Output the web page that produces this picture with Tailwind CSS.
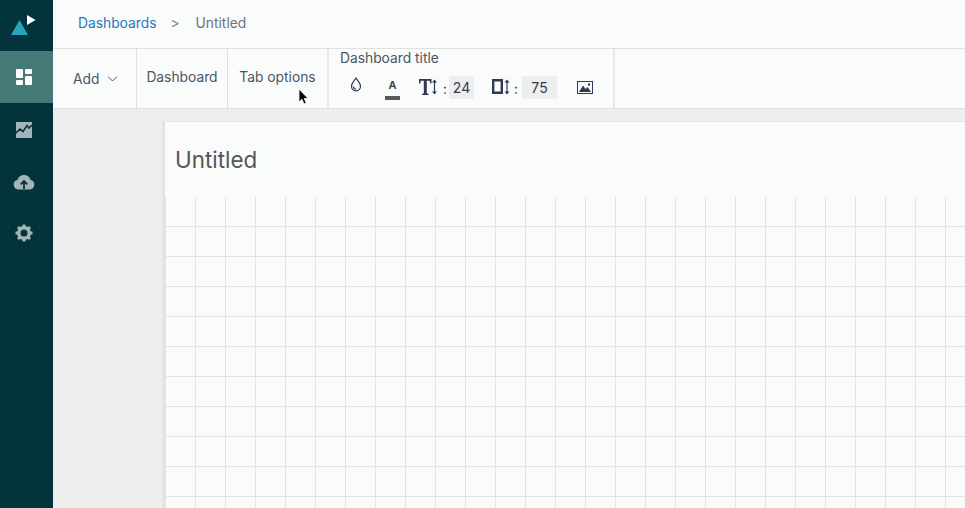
<!DOCTYPE html>
<html lang="en">
<head>
  <meta charset="UTF-8">
  <meta name="viewport" content="width=device-width, initial-scale=1.0">
  <title>Dashboard</title>
  <script src="https://cdn.jsdelivr.net/npm/@tailwindcss/browser@4"></script>
</head>
<body class="h-[508px] w-[965px] overflow-hidden bg-[#eeeeee] font-['Inter','Liberation_Sans',sans-serif] text-[13.8px] text-[#4b5563]">
  <div class="flex h-full">
    <!-- Sidebar -->
    <aside class="flex w-[53px] shrink-0 flex-col bg-[#03343b]">
      <div class="h-[51px]">
        <svg width="53" height="51" viewBox="0 0 53 51">
          <path d="M19.5 20 L28 35 H11 Z" fill="#27a5ba"/>
          <path d="M27 15 L35.5 20 L27 25 Z" fill="#ffffff"/>
        </svg>
      </div>
      <div class="flex h-[52px] items-center justify-center bg-[#467a79] pr-[6px]">
        <svg width="16" height="16" viewBox="0 0 16 16" fill="#ffffff">
          <rect x="0" y="0" width="7" height="9" rx="1"/>
          <rect x="9" y="0" width="7" height="5" rx="1"/>
          <rect x="0" y="11" width="7" height="5" rx="1"/>
          <rect x="9" y="7" width="7" height="9" rx="1"/>
        </svg>
      </div>
      <div class="flex h-[54px] items-center justify-center pr-[6px]">
        <svg width="16" height="16" viewBox="0 0 16 16">
          <rect width="16" height="16" fill="#a3b5b9"/>
          <path d="M0 11 L4 7 L7 9.5 L11 3.5 L13 6 L16 3" fill="none" stroke="#03343b" stroke-width="1.6"/>
        </svg>
      </div>
      <div class="flex h-[49px] items-center justify-center pr-[6px]">
        <svg width="22" height="17" viewBox="0 0 22 16">
          <path d="M5 16 A5 5 0 0 1 4.5 6.2 A6.8 6.8 0 0 1 17.5 6.2 A5 5 0 0 1 17 16 Z" fill="#a3b5b9"/>
          <path d="M11 15.5 V8 M7.8 10.8 L11 7.5 L14.2 10.8" fill="none" stroke="#03343b" stroke-width="1.8"/>
        </svg>
      </div>
      <div class="flex h-[54px] items-center justify-center pr-[6px]">
        <svg width="18" height="18" viewBox="0 0 18 18">
          <circle cx="9" cy="9" r="5.2" fill="none" stroke="#a3b5b9" stroke-width="3.4"/>
          <path d="M9 0.5 V17.5 M0.5 9 H17.5 M3 3 L15 15 M15 3 L3 15" stroke="#a3b5b9" stroke-width="3" stroke-dasharray="3 11 3 0"/>
        </svg>
      </div>
    </aside>

    <main class="flex min-w-0 flex-1 flex-col">
      <!-- Breadcrumb -->
      <div class="flex h-[49px] items-center border-b border-[#e0e0e0] bg-[#fafbfb] pb-[1px] pl-[25px]">
        <a class="text-[#2a77bd]">Dashboards</a>
        <span class="ml-[14px] text-[#6b7280]">&gt;</span>
        <span class="ml-[16px] text-[#6b7280]">Untitled</span>
      </div>

      <!-- Toolbar -->
      <div class="flex h-[60px] border-b border-[#e0e0e0] bg-[#fafbfb]">
        <div class="flex w-[84px] items-center gap-[8px] border-r border-[#e0e0e0] pl-[20px]">
          <span class="mt-[1px]">Add</span>
          <svg width="11" height="6" viewBox="0 0 11 6" fill="none" stroke="#4b5563"><path d="M1 0.5 L5.5 5 L10 0.5"/></svg>
        </div>
        <div class="flex w-[91px] items-center justify-center border-r border-[#e0e0e0] pb-[2px]">Dashboard</div>
        <div class="flex w-[101px] items-center justify-center border-r-2 border-[#e8e8e8] pb-[2px]">Tab options</div>
        <div class="flex w-[286px] flex-col border-r-2 border-[#e8e8e8] pl-[11px] pt-[1px]">
          <div class="leading-[16px] text-[#4b5563]">Dashboard title</div>
          <div class="mt-[9px] flex h-[24px] items-center text-[#2f3b52]">
            <svg class="mb-[5px] ml-[10px]" width="12" height="15" viewBox="0 0 12 15" fill="none" stroke="#2f3b52" stroke-width="1.2"><path d="M6 1 C7.5 4 10.5 6 10.5 9.3 A4.5 4.5 0 0 1 1.5 9.3 C1.5 6 4.5 4 6 1 Z"/><path d="M3.5 9.5 A2.5 2.5 0 0 0 6 12"/></svg>
            <div class="ml-[23px] mt-[6px] flex w-[15px] flex-col items-center">
              <span class="text-[11px] font-semibold leading-[11px]">A</span>
              <span class="mt-[5px] h-[4px] w-[15px] bg-[#595959]"></span>
            </div>
            <svg class="ml-[19px]" width="21" height="18" viewBox="0 0 21 18" fill="#2f3b52"><path d="M0 1 H12.5 V5.5 H11.4 L10.6 2.8 H7.8 V15.2 L9.6 16 V17 H3 V16 L4.8 15.2 V2.8 H1.9 L1.1 5.5 H0 Z"/><path d="M15.5 1.5 L18 4.5 H16.1 V13.5 H18 L15.5 16.5 L13 13.5 H14.9 V4.5 H13 Z"/></svg>
            <span class="mt-[5px] w-[9px] pl-[3px]">:</span>
            <span class="flex h-[23px] w-[25px] items-center justify-center bg-[#eeeeee] text-[14px]">24</span>
            <svg class="ml-[18px]" width="19" height="18" viewBox="0 0 19 18" fill="#2f3b52"><path fill-rule="evenodd" d="M0 1 H11 V16 H0 Z M2.4 3.4 V13.6 H8.6 V3.4 Z"/><path d="M15 1.5 L17.5 4.5 H15.6 V13.5 H17.5 L15 16.5 L12.5 13.5 H14.4 V4.5 H12.5 Z"/></svg>
            <span class="mt-[5px] w-[11px] pl-[3px]">:</span>
            <span class="flex h-[23px] w-[35px] items-center justify-center bg-[#eeeeee] text-[14px]">75</span>
            <svg class="ml-[20px]" width="16" height="13" viewBox="0 0 16 13"><rect x="0.5" y="0.5" width="15" height="12" fill="none" stroke="#2f3b52"/><path d="M2 11 L6 4.5 L8.5 8 L10.5 6 L14 11 Z" fill="#2f3b52"/><circle cx="12" cy="3.5" r="1.2" fill="#2f3b52"/></svg>
          </div>
        </div>
      </div>

      <!-- Canvas -->
      <div class="min-h-0 flex-1 overflow-hidden pl-[109px] pt-[12px]">
        <div class="flex h-full flex-col border-l-[3px] border-[#e4e4e4]">
          <div class="flex h-[76px] shrink-0 items-center border-t border-[#e4e4e4] bg-[#fafbfb] pl-[10px] text-[22.4px] text-[#555555]">Untitled</div>
          <div class="min-h-0 flex-1 bg-[#fafbfb] bg-[linear-gradient(to_right,#e2e4e4_1px,transparent_1px),linear-gradient(to_bottom,#e2e4e4_1px,transparent_1px)] bg-[size:30px_30px] bg-[position:0_29px]"></div>
        </div>
      </div>
    </main>
  </div>

  <!-- Mouse pointer -->
  <svg class="absolute left-[298px] top-[88px]" width="12" height="18" viewBox="0 0 12 18">
    <path d="M1 1 V14 L4 11.2 L6 16 L8.2 15 L6.2 10.5 H10 Z" fill="#000000" stroke="#ffffff" stroke-width="0.8"/>
  </svg>
</body>
</html>
